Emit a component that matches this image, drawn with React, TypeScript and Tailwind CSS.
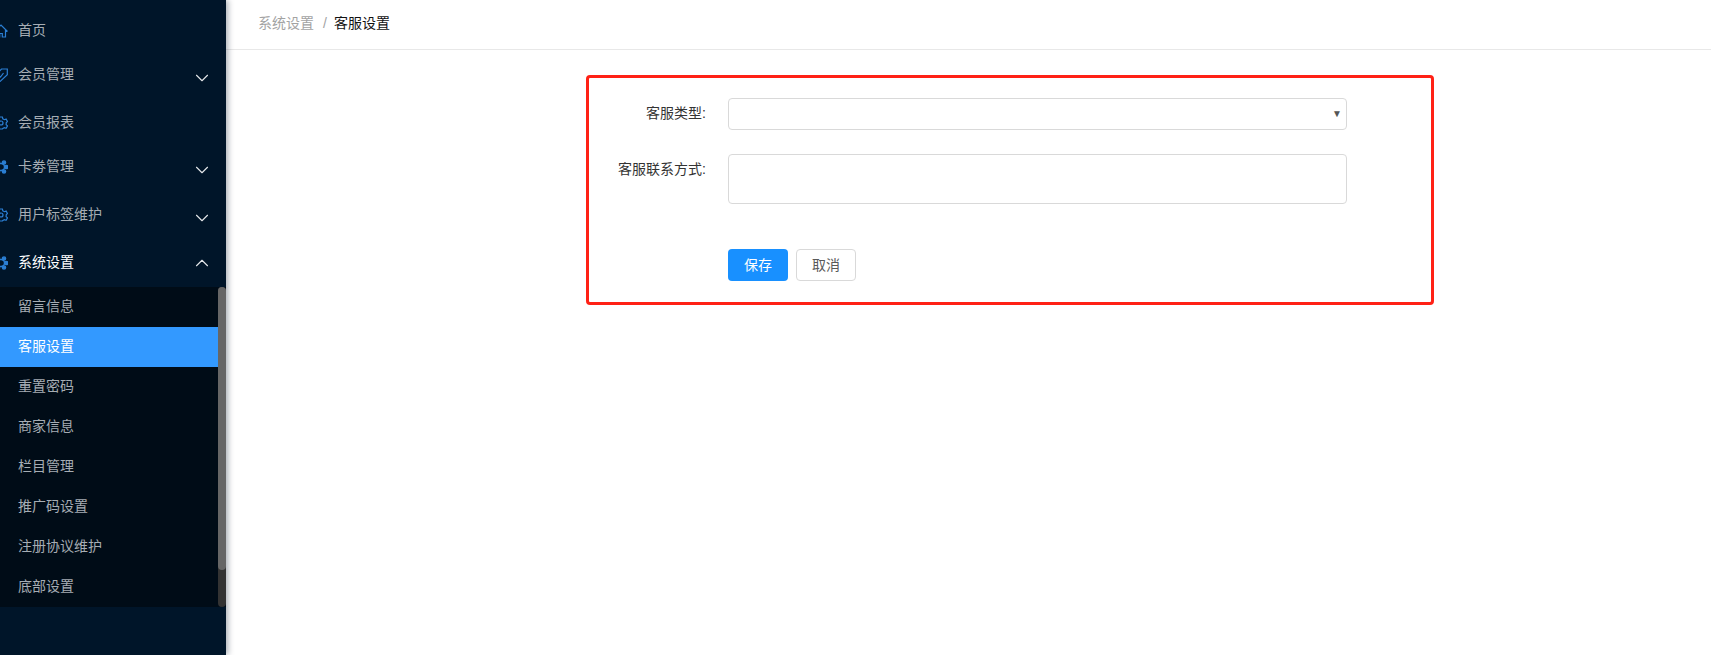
import { ChevronDown, ChevronUp } from 'lucide-react';
import type { ReactNode } from 'react';

const FONT = 'font-["Liberation_Sans","Noto_Sans_CJK_SC",sans-serif]';

function HomeIcon() {
  return (
    <svg viewBox="0 0 14 14" className="h-[14px] w-[14px]" fill="none" stroke="#2b7fd4" strokeWidth="1.2">
      <path d="M.5 7.5 7 1l6.5 6.5M2.5 6v7h3.2V9.5h2.6V13h3.2V6" />
    </svg>
  );
}

function TagIcon() {
  return (
    <svg viewBox="0 0 14 14" className="h-[14px] w-[14px]" fill="none" stroke="#2b7fd4" strokeWidth="1.2">
      <path d="M7.5 1h5.8v5.8L6 13.5.7 8.2z" />
      <path d="m4.5 7 2 2 3-4" />
    </svg>
  );
}

function GearIcon() {
  return (
    <svg viewBox="0 0 14 14" className="h-[14px] w-[14px]" fill="none" stroke="#2b7fd4" strokeWidth="1.2">
      <path d="M5.6 1h2.8l.4 1.8 1.6.9 1.7-.6 1.4 2.4-1.3 1.2v1.8l-.1.2 1.4 1.2-1.4 2.4-1.7-.6-1.6.9L8.4 13H5.6l-.4-1.8-1.6-.9-1.7.6L.5 8.5l1.4-1.2V6.6L.5 5.5l1.4-2.4 1.7.6 1.6-.9z" />
      <circle cx="7" cy="7" r="2" />
    </svg>
  );
}

function ClusterIcon() {
  return (
    <svg viewBox="0 0 14 14" className="h-[14px] w-[14px]" fill="none" stroke="#2b7fd4" strokeWidth="1.4">
      <circle cx="7" cy="7" r="3.5" />
      <circle cx="4" cy="2.5" r="1.6" fill="#2b7fd4" />
      <circle cx="10" cy="2.5" r="1.6" fill="#2b7fd4" />
      <circle cx="12.2" cy="7" r="1.6" fill="#2b7fd4" />
      <circle cx="10" cy="11.5" r="1.6" fill="#2b7fd4" />
      <circle cx="4" cy="11.5" r="1.6" fill="#2b7fd4" />
    </svg>
  );
}

type MenuItem = { label: string; icon: ReactNode; arrow?: 'down' | 'up'; active?: boolean; className: string };

const MENU: MenuItem[] = [
  { label: '首页', icon: <HomeIcon />, className: 'mt-[9px]' },
  { label: '会员管理', icon: <TagIcon />, arrow: 'down', className: '' },
  { label: '会员报表', icon: <GearIcon />, className: 'mt-[4px]' },
  { label: '卡劵管理', icon: <ClusterIcon />, arrow: 'down', className: '' },
  { label: '用户标签维护', icon: <GearIcon />, arrow: 'down', className: 'mt-[4px]' },
  { label: '系统设置', icon: <ClusterIcon />, arrow: 'up', active: true, className: 'mt-[4px]' },
];

const SUB_MENU = ['留言信息', '客服设置', '重置密码', '商家信息', '栏目管理', '推广码设置', '注册协议维护', '底部设置'];

export default function App() {
  return (
    <div className={`flex h-[655px] w-[1711px] overflow-hidden bg-white text-[14px] ${FONT}`}>
      <aside className="z-10 flex w-[226px] shrink-0 flex-col bg-[#001529] shadow-[2px_0_6px_rgba(0,21,41,0.35)]">
        {MENU.map((item) => (
          <div
            key={item.label}
            className={`flex h-[44px] shrink-0 items-center pb-[1px] pr-[13px] ${item.className} ${item.active ? 'text-white' : 'text-[#a6adb4]'}`}
          >
            <span className="ml-[-6px] mr-[10px] flex w-[14px] justify-center">{item.icon}</span>
            <span className="flex-1">{item.label}</span>
            {item.arrow === 'down' && <ChevronDown size={22} strokeWidth={1.2} className="mt-[6px] text-[#e4e7ea]" />}
            {item.arrow === 'up' && <ChevronUp size={22} strokeWidth={1.2} className="text-[#e4e7ea]" />}
          </div>
        ))}
        <div className="mt-[2px] flex h-[320px] shrink-0 bg-[#000c17]">
          <ul className="flex-1">
            {SUB_MENU.map((label) => (
              <li
                key={label}
                className={`flex h-[40px] items-center pb-[1px] pl-[18px] ${label === '客服设置' ? 'bg-[#3399ff] text-white' : 'text-[#a6adb4]'}`}
              >
                {label}
              </li>
            ))}
          </ul>
          <div className="h-full w-[8px] rounded-[4px] bg-[#333]">
            <div className="h-[283px] rounded-[4px] bg-[#666]" />
          </div>
        </div>
      </aside>

      <main className="min-w-0 flex-1">
        <div className="flex h-[50px] items-center border-b border-[#e8e8e8] pb-[2px] pl-[32px]">
          <span className="text-[#a3a3a3]">系统设置</span>
          <span className="ml-[9px] mr-[7px] text-[#a3a3a3]">/</span>
          <span className="text-[#111]">客服设置</span>
        </div>

        <div className="ml-[360px] mt-[25px] h-[230px] w-[848px] rounded-[4px] border-[3px] border-[#ff2116] pt-[20px]">
          <div className="flex">
            <div className="flex h-[32px] w-[117px] items-center justify-end pb-[1px] text-[#333]">客服类型:</div>
            <div className="relative ml-[22px] h-[32px] w-[619px] rounded-[4px] border border-[#d9d9d9]">
              <span className="absolute right-[4px] top-[7px] text-[10px] text-[#555]">▼</span>
            </div>
          </div>
          <div className="mt-[24px] flex">
            <div className="flex h-[32px] w-[117px] items-center justify-end pb-[1px] text-[#333]">客服联系方式:</div>
            <div className="ml-[22px] h-[50px] w-[619px] rounded-[4px] border border-[#d9d9d9]" />
          </div>
          <div className="ml-[139px] mt-[45px] flex gap-[8px]">
            <button className="h-[32px] w-[60px] rounded-[4px] bg-[#1890ff] text-white">保存</button>
            <button className="h-[32px] w-[60px] rounded-[4px] border border-[#d9d9d9] text-[#595959]">取消</button>
          </div>
        </div>
      </main>
    </div>
  );
}
